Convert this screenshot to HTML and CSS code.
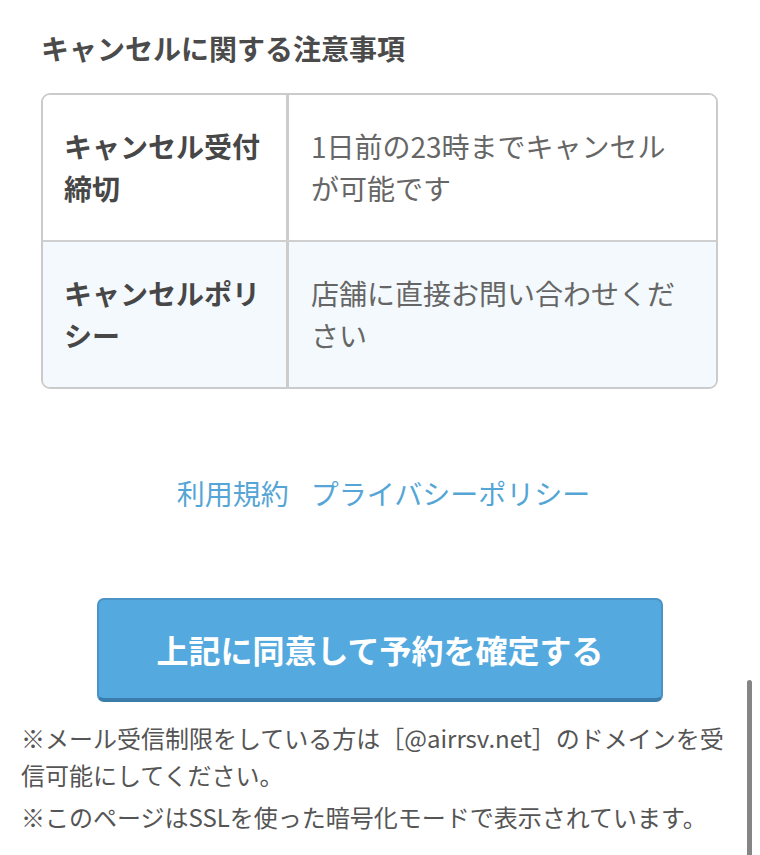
FILE: index.html
```html
<!DOCTYPE html>
<html lang="ja">
<head>
<meta charset="utf-8">
<title>キャンセルに関する注意事項</title>
<link rel="stylesheet" href="styles.css">
</head>
<body>
<main class="page">
  <section class="cancel">
    <h2 class="cancel-title">キャンセルに関する注意事項</h2>
    <div class="policy-table">
      <div class="policy-row">
        <div class="policy-label">キャンセル受付締切</div>
        <div class="policy-value">1日前の23時までキャンセルが可能です</div>
      </div>
      <div class="policy-row policy-row--alt">
        <div class="policy-label">キャンセルポリシー</div>
        <div class="policy-value">店舗に直接お問い合わせください</div>
      </div>
    </div>
  </section>

  <nav class="links">
    <a class="link" href="#">利用規約</a>
    <a class="link" href="#">プライバシーポリシー</a>
  </nav>

  <div class="submit-wrap">
    <button class="submit" type="button">上記に同意して予約を確定する</button>
  </div>

  <div class="notes">
    <p class="note">※メール受信制限をしている方は［@airrsv.net］のドメインを受信可能にしてください。</p>
    <p class="note note--gap">※このページはSSLを使った暗号化モードで表示されています。</p>
  </div>
</main>
<div class="scrollbar"></div>
</body>
</html>
```

FILE: styles.css
```css
* { box-sizing: border-box; }

html, body {
  margin: 0;
  padding: 0;
  background: #ffffff;
}

body {
  width: 760px;
  height: 855px;
  overflow: hidden;
  font-family: "Noto Sans CJK JP", "Noto Sans", sans-serif;
  color: #555555;
}

.page {
  display: flex;
  flex-direction: column;
}

.cancel {
  padding: 27px 42px 0 41px;
}

.cancel-title {
  margin: 0;
  font-size: 28px;
  line-height: 42px;
  font-weight: 700;
  color: #4b4b4b;
}

.policy-table {
  margin-top: 24px;
  border: 2px solid #cbcbcb;
  border-radius: 9px;
  overflow: hidden;
}

.policy-row {
  display: grid;
  grid-template-columns: 246px 1fr;
  background: #ffffff;
}

.policy-row--alt {
  background: #f3f9fc;
  border-top: 2px solid #cfcfcf;
}

.policy-label,
.policy-value {
  padding: 30px 22px 31px 21px;
  font-size: 28px;
  line-height: 42px;
}

.policy-label {
  font-weight: 700;
  color: #474747;
  border-right: 3px solid #cccccc;
}

.policy-value {
  color: #666666;
  padding-left: 22px;
  padding-right: 38px;
}

.links {
  margin-top: 83px;
  display: flex;
  justify-content: center;
  gap: 22px;
  padding-left: 7px;
}

.link {
  font-size: 28px;
  line-height: 42px;
  color: #55a6d6;
  text-decoration: none;
}

.submit-wrap {
  margin-top: 84px;
  display: flex;
  justify-content: center;
}

.submit {
  width: 566px;
  height: 104px;
  background: #54aadf;
  border: 2px solid #4a93c6;
  border-bottom: 4px solid #3b7daa;
  border-radius: 7px;
  color: #ffffff;
  font-family: "Noto Sans CJK JP", "Noto Sans", sans-serif;
  font-size: 32px;
  font-weight: 700;
  line-height: 1;
  padding: 0;
}

.notes {
  padding: 17px 30px 0 21px;
}

.note {
  margin: 0;
  font-size: 24px;
  line-height: 37px;
  color: #555555;
}

.note--gap {
  margin-top: 5px;
}

.scrollbar {
  position: absolute;
  left: 747px;
  top: 680px;
  width: 5px;
  height: 175px;
  background: #858585;
  border-radius: 3px 3px 0 0;
}
```
